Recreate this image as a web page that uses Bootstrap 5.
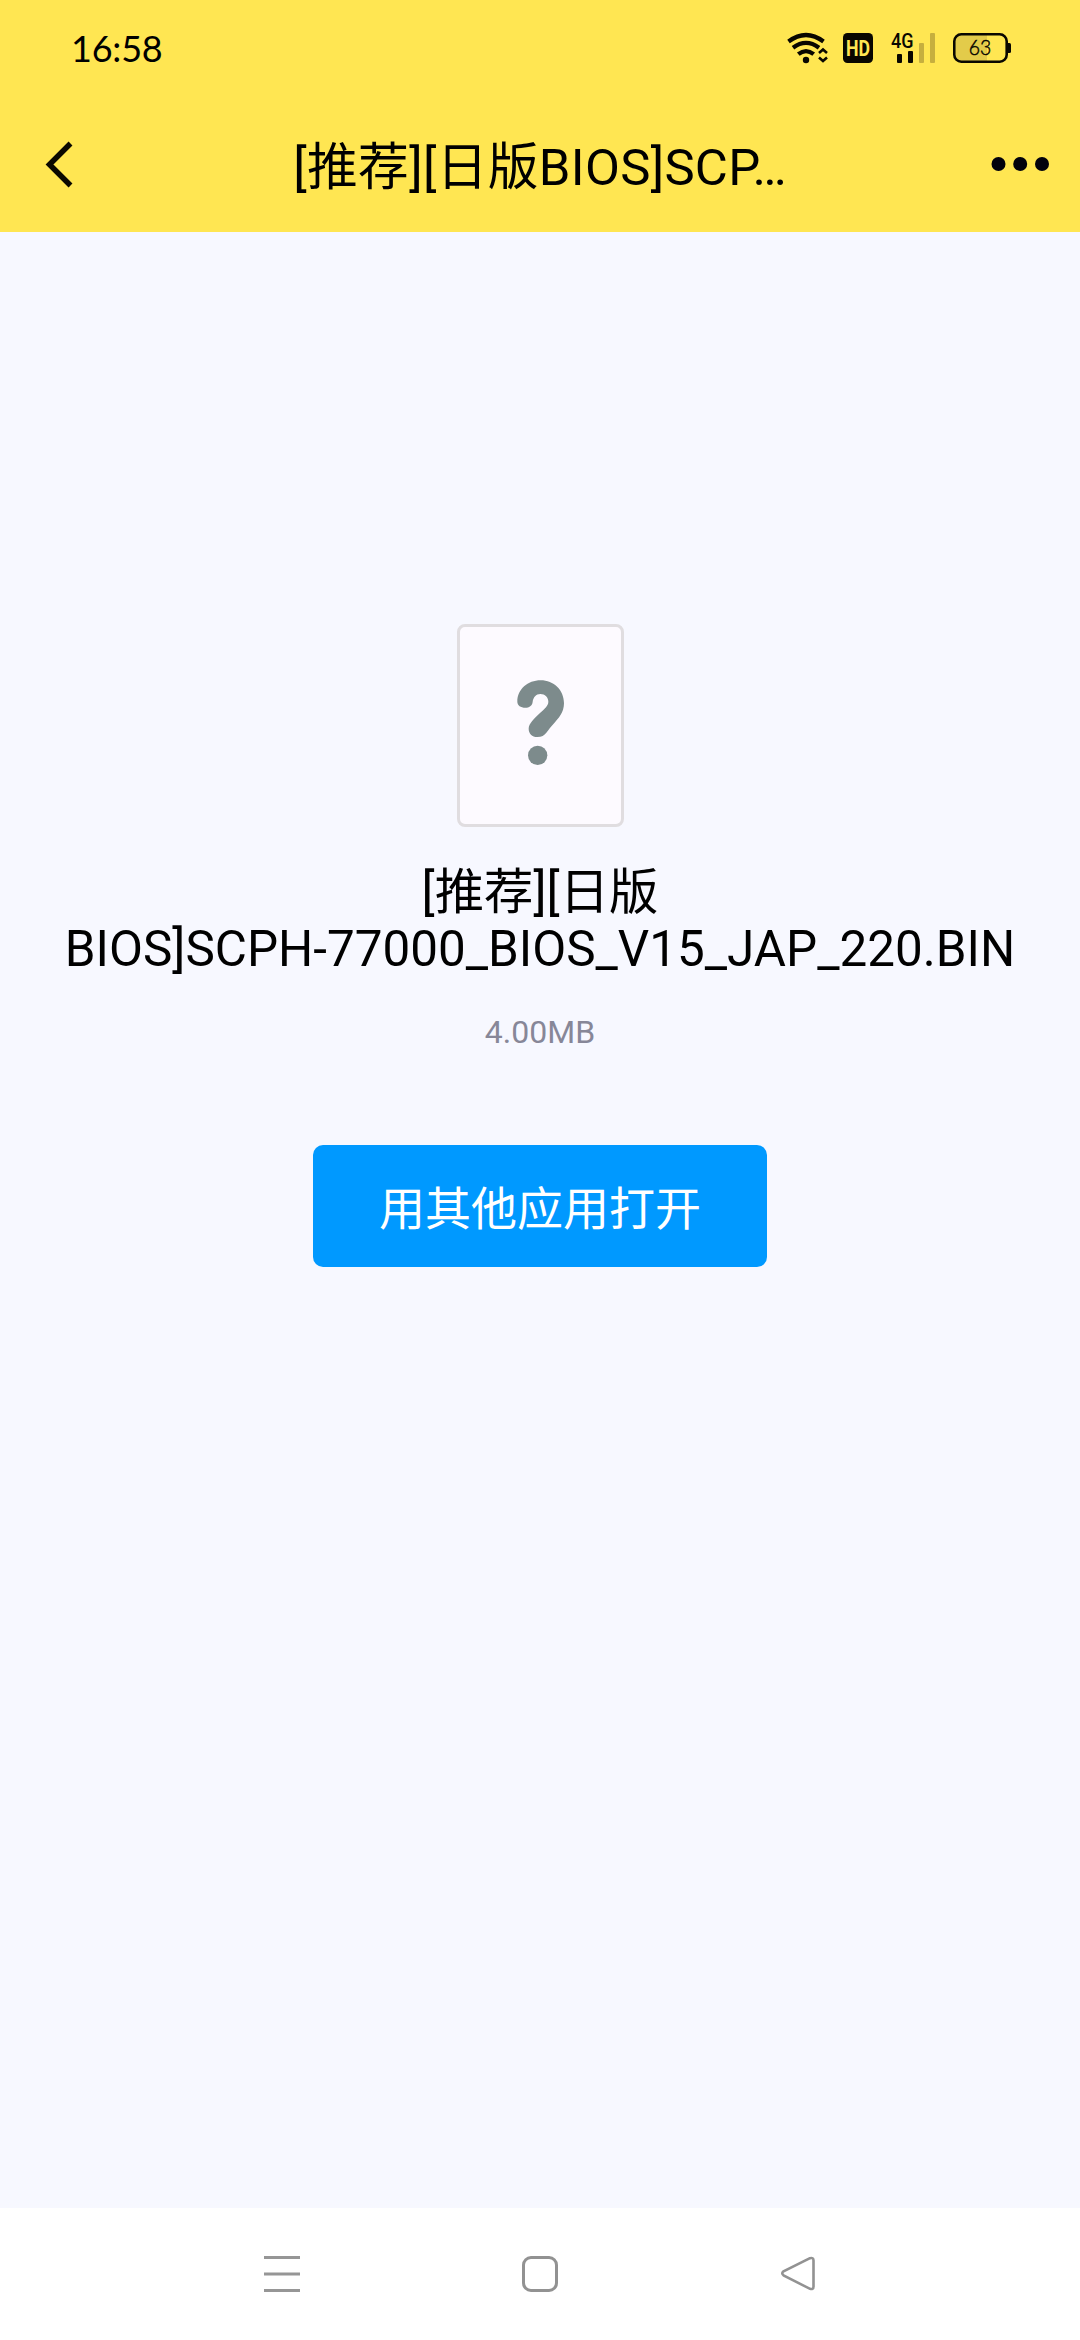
<!DOCTYPE html>
<html lang="zh-CN">
<head>
<meta charset="utf-8">
<meta name="viewport" content="width=device-width, initial-scale=1">
<title>文件预览</title>
<link href="https://cdn.jsdelivr.net/npm/bootstrap@5.3.0/dist/css/bootstrap.min.css" rel="stylesheet">
<style>
body{font-family:Roboto,"Noto Sans CJK SC",sans-serif;background:#f7f8ff;color:#000;height:2340px;overflow:hidden}
svg{display:block;flex:none}
.top-area{background:#ffe652;height:232px}
.status-row{height:95px;padding:0 50px 0 71px}
.clock{font:400 36px/1 Lato,sans-serif;letter-spacing:-.2px}
.title-row{height:137px;padding:1px 30px 0 44px}
.page-title{font-size:50.8px;line-height:64px;font-weight:400;width:500px;padding-top:8px;margin-right:14px!important;letter-spacing:.3px}
.nav-btn{width:59px;border:0;background:none}
.preview{padding-top:392px}
.file-thumb{width:167px;height:203px;border:3px solid #e0dde0;border-radius:8px;background:#fdfaff}
.file-name{font-size:49.4px;line-height:57px;margin-top:37px;font-weight:400}
.file-size{font-size:32px;line-height:38px;color:#878798;margin-top:35px}
.open-btn{width:454px;height:122px;border-radius:10px;background:#0099ff;color:#fff;font-size:46px;line-height:1;margin-top:94px;border:0}
.open-btn span{display:block;padding-top:6px}
.sys-nav{height:132px;background:#fff;gap:222px}
</style>
</head>
<body class="d-flex flex-column m-0">
<header class="top-area">
  <div class="status-row d-flex align-items-center justify-content-between">
    <span class="clock">16:58</span>
    <svg width="260" height="65" viewBox="0 0 260 65" aria-hidden="true">
      <g fill="none" stroke="#090700" stroke-width="4.2">
        <path d="M18.5 26.5Q36 13.5 53.5 26.5"/><path d="M23 32.7Q36 23 49 32.7"/><path d="M28.3 39.2Q36 33 43.7 39.2"/>
      </g>
      <circle cx="36" cy="45" r="3.2" fill="#090700"/>
      <path d="M49 38l4-3.5 4 3.5M49 42.5l4 3.5 4-3.5" fill="none" stroke="#090700" stroke-width="2.6"/>
      <rect x="73" y="18" width="30" height="30" rx="4.5" fill="#090700"/>
      <text x="88" y="40.5" text-anchor="middle" font-family="Roboto" font-weight="700" font-size="21.5" textLength="24" lengthAdjust="spacingAndGlyphs" fill="#ffe652">HD</text>
      <text x="121" y="32.5" font-family="Roboto" font-weight="500" font-size="20" textLength="22.5" lengthAdjust="spacingAndGlyphs" fill="#090700">4G</text>
      <rect x="127" y="39" width="5" height="9" rx="1" fill="#090700"/><rect x="138" y="36" width="5" height="12" rx="1" fill="#090700"/>
      <rect x="149" y="28" width="5" height="20" rx="1" fill="#c6af3e"/><rect x="160" y="18" width="5" height="30" rx="1" fill="#c6af3e"/>
      <path d="M191 20H217V46H191Q186 46 186 41V25Q186 20 191 20Z" fill="#e3cb4a"/>
      <rect x="184.3" y="19.3" width="52.4" height="27.4" rx="7" fill="none" stroke="#090700" stroke-width="2.6"/>
      <path d="M238 28h1.5q1.5 0 1.5 1.5v7q0 1.5-1.5 1.5h-1.5z" fill="#090700"/>
      <text x="210" y="40" text-anchor="middle" font-family="Lato" font-weight="300" font-size="21" textLength="22.5" lengthAdjust="spacingAndGlyphs" fill="#090700" stroke="#090700" stroke-width=".5">63</text>
    </svg>
  </div>
  <div class="title-row d-flex align-items-center justify-content-between">
    <button class="nav-btn p-0" type="button" aria-label="返回"><svg width="32" height="50" viewBox="0 0 32 50"><path d="M26.5 4.5 5.5 25.5 26.5 46.5" fill="none" stroke="#0b0900" stroke-width="5.5"/></svg></button>
    <h1 class="page-title text-center text-nowrap m-0">[推荐][日版BIOS]SCP…</h1>
    <button class="nav-btn p-0" type="button" aria-label="更多"><svg width="59" height="16" viewBox="0 0 59 16" fill="#02020c"><circle cx="7.5" cy="8" r="7"/><circle cx="29.2" cy="8" r="7"/><circle cx="51" cy="8" r="7"/></svg></button>
  </div>
</header>
<main class="preview flex-grow-1 d-flex flex-column align-items-center">
  <div class="file-thumb d-flex">
    <svg width="161" height="197" viewBox="57 51 483 591" fill="#7d8b8c" aria-hidden="true">
      <path d="M229 275C229 238 260 211 299 211C338 211 369 240 369 280C369 308 352 326 338 341C318 360 316 381 289 381C273 381 263 370 263 356C263 341 280 325 297 309C312 295 322 287 322 275C322 262 312 252 298 252C285 252 277 262 275 275C274 287 264 293 253 293C239 293 229 286 229 275Z"/>
      <circle cx="290" cy="436" r="29"/>
    </svg>
  </div>
  <h2 class="file-name text-center mb-0">[推荐][日版<br>BIOS]SCPH-77000_BIOS_V15_JAP_220.BIN</h2>
  <div class="file-size">4.00MB</div>
  <button class="open-btn btn p-0" type="button"><span>用其他应用打开</span></button>
</main>
<nav class="sys-nav d-flex align-items-center justify-content-center" aria-label="系统导航">
  <svg width="36" height="36" fill="#969696"><rect width="36" height="3"/><rect y="16.5" width="36" height="3"/><rect y="33" width="36" height="3"/></svg>
  <svg width="36" height="36"><rect x="1.5" y="1.5" width="33" height="33" rx="7.5" fill="none" stroke="#929292" stroke-width="3"/></svg>
  <svg width="36" height="36"><path d="M30 2.2 3.5 15.3Q1 17.3 3.5 19.3L30 32.8Q33.5 33.8 33.5 30.5V4.5Q33.5 1.2 30 2.2Z" fill="none" stroke="#929292" stroke-width="2.6"/></svg>
</nav>
<script src="https://cdn.jsdelivr.net/npm/bootstrap@5.3.0/dist/js/bootstrap.bundle.min.js"></script>
</body>
</html>
